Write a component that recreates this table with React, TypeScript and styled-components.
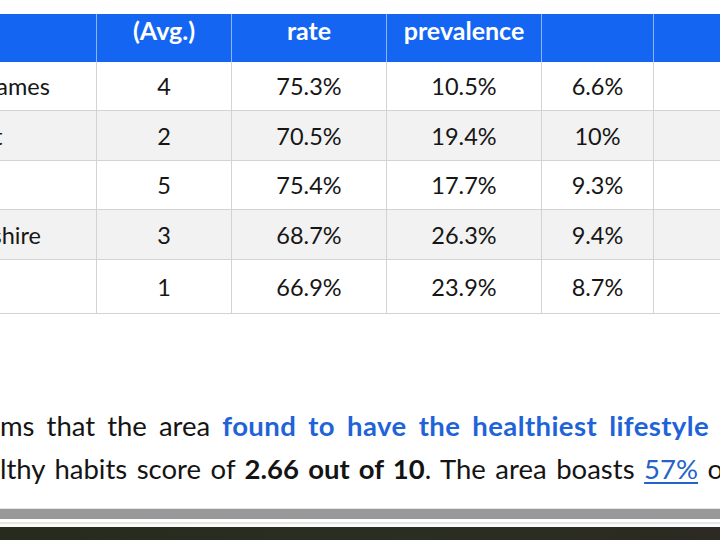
import React from "react";
import styled, { createGlobalStyle } from "styled-components";

const Global = createGlobalStyle`
  html, body { margin: 0; padding: 0; background: #ffffff; }
  body { font-family: Lato, "Open Sans", sans-serif; }
  * { box-sizing: border-box; }
`;

const Page = styled.div`
  width: 720px;
  height: 540px;
  overflow: hidden;
  display: flex;
  flex-direction: column;
  background: #ffffff;
`;

const COLS = "308px 135px 155px 155px 112px 147px";

const Table = styled.div`
  margin-top: 14px;
  margin-left: -212px;
  width: 1012px;
  display: flex;
  flex-direction: column;
  font-family: Lato, sans-serif;
  font-size: 23.5px;
  color: #161616;
`;

const HeadRow = styled.div`
  display: grid;
  grid-template-columns: ${COLS};
  height: 48px;
  background: #1466f2;
`;

const HeadCell = styled.div`
  color: #ffffff;
  font-weight: 700;
  font-size: 25px;
  line-height: 30px;
  padding: 1px 6px 0;
  text-align: center;
  border-left: 1px solid #8fb5f7;
  &:first-child { border-left: none; }
`;

const Row = styled.div<{ $alt: boolean; $h: number }>`
  display: grid;
  grid-template-columns: ${COLS};
  height: ${(p) => p.$h}px;
  background: ${(p) => (p.$alt ? "#f2f2f2" : "#ffffff")};
  border-bottom: 1px solid #d3d3d3;
`;

const Cell = styled.div<{ $left?: boolean }>`
  display: flex;
  align-items: center;
  justify-content: ${(p) => (p.$left ? "flex-start" : "center")};
  padding: ${(p) => (p.$left ? "0 0 0 14px" : "0 6px")};
  white-space: nowrap;
  overflow: hidden;
  border-left: 1px solid #d3d3d3;
  &:first-child { border-left: none; }
`;

const Article = styled.div`
  margin-top: 90px;
  font-family: Lato, sans-serif;
  font-size: 27.5px;
  line-height: 43px;
  color: #141414;
`;

const Line = styled.div<{ $ws: number }>`
  white-space: nowrap;
  overflow: hidden;
  word-spacing: ${(p) => p.$ws}px;
`;

const Highlight = styled.strong`
  color: #1f63d8;
  font-weight: 700;
  letter-spacing: 0.4px;
`;

const Bold = styled.strong`
  font-weight: 700;
  color: #141414;
`;

const Link = styled.a`
  color: #2563c8;
  text-decoration: underline;
  text-underline-offset: 3px;
`;

const Bottom = styled.div`
  margin-top: auto;
  display: flex;
  flex-direction: column;
`;

const Rule = styled.div<{ $h: number; $c: string }>`
  height: ${(p) => p.$h}px;
  background: ${(p) => p.$c};
`;

const DarkStrip = styled.div`
  height: 13px;
  background: linear-gradient(90deg, #262b1e 0%, #2a2e22 50%, #2c2a22 100%);
`;

const rows = [
  { name: "Richmond upon Thames", rank: "4", a: "75.3%", b: "10.5%", c: "6.6%" },
  { name: "Winchester District", rank: "2", a: "70.5%", b: "19.4%", c: "10%" },
  { name: "Wokingham", rank: "5", a: "75.4%", b: "17.7%", c: "9.3%" },
  { name: "East Northamptonshire", rank: "3", a: "68.7%", b: "26.3%", c: "9.4%" },
  { name: "Surrey", rank: "1", a: "66.9%", b: "23.9%", c: "8.7%" },
];

const heights = [49, 50, 49, 50, 54];

export default function App() {
  return (
    <Page>
      <Global />
      <Table>
        <HeadRow>
          <HeadCell />
          <HeadCell>(Avg.)</HeadCell>
          <HeadCell>rate</HeadCell>
          <HeadCell>prevalence</HeadCell>
          <HeadCell />
          <HeadCell />
        </HeadRow>
        {rows.map((r, i) => (
          <Row key={r.name} $alt={i % 2 === 1} $h={heights[i]}>
            <Cell $left>{r.name}</Cell>
            <Cell>{r.rank}</Cell>
            <Cell>{r.a}</Cell>
            <Cell>{r.b}</Cell>
            <Cell>{r.c}</Cell>
            <Cell />
          </Row>
        ))}
      </Table>
      <Article>
        <Line $ws={5}>
          ms that the area <Highlight>found to have the healthiest lifestyle</Highlight>
        </Line>
        <Line $ws={2.5}>
          lthy habits score of <Bold>2.66 out of 10</Bold>. The area boasts{" "}
          <Link href="#">57%</Link> of
        </Line>
      </Article>
      <Bottom>
        <Rule $h={1} $c="#e4e4e4" />
        <Rule $h={10} $c="#999999" />
        <Rule $h={3} $c="#ffffff" />
        <Rule $h={2} $c="#e6e6e6" />
        <Rule $h={3} $c="#fbfbfb" />
        <DarkStrip />
      </Bottom>
    </Page>
  );
}
